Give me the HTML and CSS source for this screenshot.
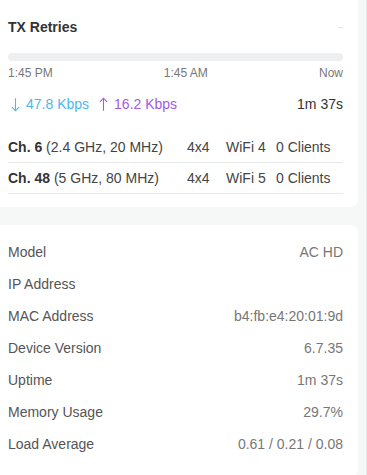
FILE: index.html
```html
<!DOCTYPE html>
<html lang="en">
<head>
    <meta charset="UTF-8">
    <meta name="viewport" content="width=device-width, initial-scale=1.0">
    <title>Device Overview</title>
    <link rel="stylesheet" href="styles.css">
</head>
<body>
    <div class="page">
        <div class="card card-top">
            <div class="card-head">
                <h2>TX Retries</h2>
                <span class="legend-dash"></span>
            </div>
            <div class="bar"></div>
            <div class="axis">
                <span>1:45 PM</span>
                <span>1:45 AM</span>
                <span>Now</span>
            </div>
            <div class="speeds">
                <span class="down">
                    <svg class="arrow" viewBox="0 0 10 16"><path d="M5 1V15M1 11L5 15L9 11" /></svg>47.8 Kbps
                </span>
                <span class="up">
                    <svg class="arrow" viewBox="0 0 10 16"><path d="M5 15V1M1 5L5 1L9 5" /></svg>16.2 Kbps
                </span>
                <span class="uptime">1m 37s</span>
            </div>
            <div class="radios">
                <div class="radio">
                    <span><b>Ch. 6</b> (2.4 GHz, 20 MHz)</span>
                    <span>4x4</span>
                    <span>WiFi 4</span>
                    <span>0 Clients</span>
                </div>
                <div class="radio">
                    <span><b>Ch. 48</b> (5 GHz, 80 MHz)</span>
                    <span>4x4</span>
                    <span>WiFi 5</span>
                    <span>0 Clients</span>
                </div>
            </div>
        </div>

        <div class="card card-info">
            <div class="info-row"><span>Model</span><span class="val">AC HD</span></div>
            <div class="info-row"><span>IP Address</span><span class="val"></span></div>
            <div class="info-row"><span>MAC Address</span><span class="val">b4:fb:e4:20:01:9d</span></div>
            <div class="info-row"><span>Device Version</span><span class="val">6.7.35</span></div>
            <div class="info-row"><span>Uptime</span><span class="val">1m 37s</span></div>
            <div class="info-row"><span>Memory Usage</span><span class="val">29.7%</span></div>
            <div class="info-row"><span>Load Average</span><span class="val">0.61 / 0.21 / 0.08</span></div>
        </div>
    </div>
</body>
</html>
```

FILE: styles.css
```css
html, body { margin: 0; height: 100%; }
body { font-family: "Liberation Sans", Arial, sans-serif; background: #f6f7f7; color: #444; overflow: hidden; border-right: 1px solid #e9ebeb; box-sizing: border-box; }
.page { padding: 0 8px 0 0; margin-top: -7px; }
.card { background: #fff; border-radius: 8px; margin-left: -8px; padding: 0 15px 0 16px; }
.card-top { padding-top: 26px; padding-bottom: 13px; }
.card-info { margin-top: 18px; padding-top: 11px; padding-bottom: 17px; }

.card-head { display: flex; justify-content: space-between; align-items: center; height: 16px; }
.card-head h2 { margin: 0; font-size: 14px; font-weight: bold; color: #333; }
.legend-dash { width: 5px; height: 1px; background: #e4e4e4; }

.bar { height: 8px; background: #eeeff0; border-radius: 4px; margin-top: 18px; }
.axis { display: flex; justify-content: space-between; font-size: 12px; color: #777; margin-top: 5px; line-height: 14px; }

.speeds { display: flex; align-items: center; font-size: 14px; margin-top: 16px; line-height: 16px; padding-left: 3px; }
.speeds .down { color: #4db6ef; display: flex; align-items: center; }
.speeds .up { color: #a35ae8; margin-left: 10px; display: flex; align-items: center; }
.speeds .uptime { margin-left: auto; color: #333; }
.arrow { width: 9px; height: 15px; margin-right: 6px; fill: none; stroke: currentColor; stroke-width: 1.2; }

.radios { margin-top: 20px; }
.radio { display: grid; grid-template-columns: 179px 39px 50px 1fr; font-size: 14px; line-height: 16px; padding: 7px 0 7px; border-bottom: 1px solid #e8e9e9; color: #444; }
.radio b { color: #333; }

.info-row { display: flex; justify-content: space-between; font-size: 14px; line-height: 16px; padding: 8px 0; color: #555; }
.info-row .val { color: #777; }
```
